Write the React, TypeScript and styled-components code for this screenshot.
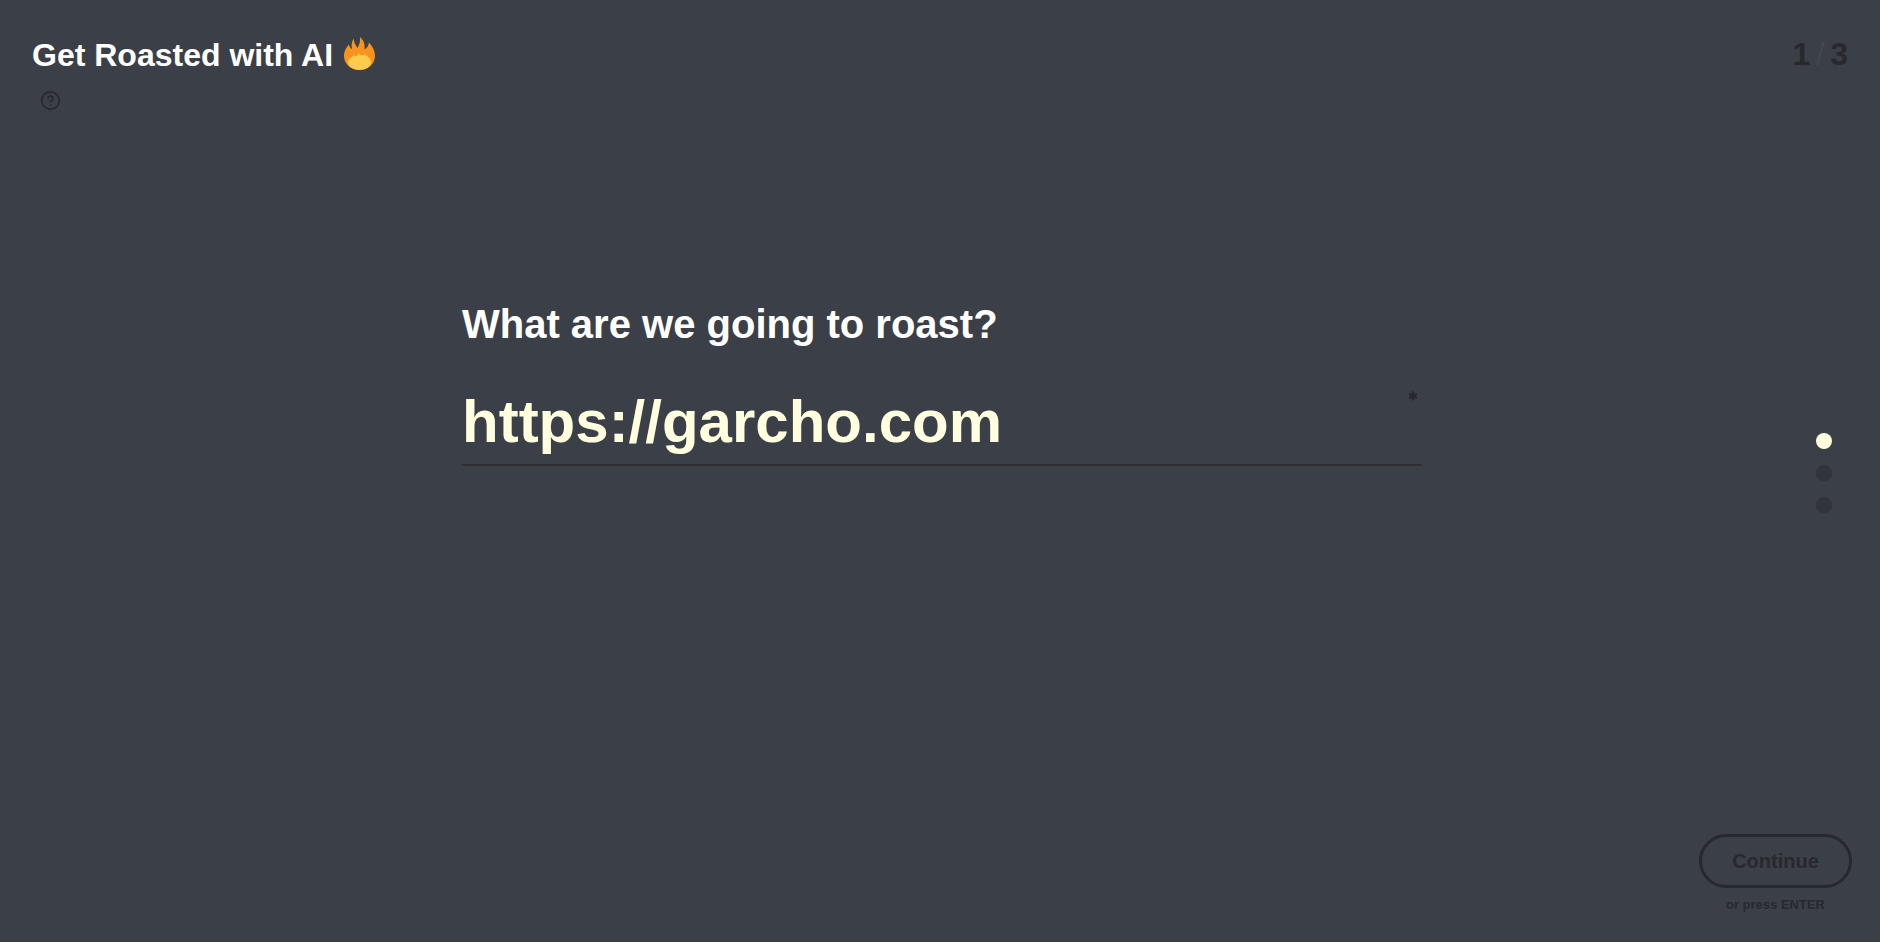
import React from 'react';
import styled, { createGlobalStyle } from 'styled-components';
import { Asterisk, CircleHelp } from 'lucide-react';

const GlobalStyle = createGlobalStyle`
  html, body {
    margin: 0;
    padding: 0;
    background: #3b3f47;
  }
  body {
    font-family: "Liberation Sans", Arial, sans-serif;
  }
`;

const Page = styled.div`
  height: 100vh;
  display: grid;
  grid-template-columns: 462px 960px 1fr;
  grid-template-rows: 126px 1fr 82px;
  background: #3b3f47;
  overflow: hidden;
`;

const Brand = styled.div`
  grid-column: 1;
  padding: 36px 0 0 32px;
  white-space: nowrap;
`;

const Title = styled.h1`
  display: flex;
  align-items: flex-start;
  gap: 11px;
  margin: 0;
  font-size: 32px;
  line-height: 38px;
  font-weight: 700;
  color: #ffffff;
`;

const Flame = styled.svg`
  flex: none;
  width: 31px;
  height: 33px;
  margin-top: 1px;
`;

const HelpButton = styled.div`
  display: flex;
  margin: 16px 0 0 8px;
  color: #27292e;
`;

const Counter = styled.div`
  grid-column: 3;
  display: flex;
  justify-content: flex-end;
  align-items: center;
  align-self: start;
  gap: 5.5px;
  padding: 36px 32px 0 0;
  font-size: 32px;
  line-height: 36px;
  font-weight: 700;
  color: #27292e;
`;

const Slash = styled.span`
  font-weight: 400;
  color: #44474f;
`;

const Form = styled.main`
  grid-column: 2;
  grid-row: 2;
  padding-top: 174px;
`;

const Question = styled.h2`
  margin: 0;
  font-size: 40px;
  line-height: 48px;
  font-weight: 700;
  color: #ffffff;
`;

const Field = styled.div`
  position: relative;
  margin-top: 32px;
  border-bottom: 2px solid #2d2f34;
`;

const Answer = styled.div`
  font-size: 60px;
  line-height: 84px;
  font-weight: 700;
  color: #ffffe0;
`;

const Required = styled.span`
  position: absolute;
  top: 9px;
  right: 2px;
  display: flex;
  color: #27292e;
`;

const Steps = styled.nav`
  grid-column: 3;
  grid-row: 2;
  display: flex;
  flex-direction: column;
  gap: 16px;
  align-items: flex-end;
  padding: 307px 48px 0 0;
`;

const Dot = styled.span<{ $active?: boolean }>`
  width: 16px;
  height: 16px;
  border-radius: 50%;
  background: ${(p) => (p.$active ? '#ffffe0' : '#31343a')};
`;

const Actions = styled.div`
  grid-column: 3;
  grid-row: 2 / 4;
  align-self: end;
  justify-self: end;
  display: flex;
  flex-direction: column;
  align-items: center;
  padding: 0 28px 30px 0;
`;

const ContinueButton = styled.button`
  width: 153px;
  height: 54px;
  padding: 0;
  border: 3px solid #27292e;
  border-radius: 27px;
  background: transparent;
  font-family: inherit;
  font-size: 20px;
  font-weight: 700;
  color: #27292e;
`;

const Hint = styled.span`
  margin-top: 9px;
  font-size: 13px;
  line-height: 15px;
  font-weight: 700;
  color: #27292e;
`;

function App() {
  return (
    <Page>
      <GlobalStyle />
      <Brand>
        <Title>
          Get Roasted with AI
          <Flame viewBox="0 0 31 33" role="img" aria-label="fire">
            <path
              fill="#f7931e"
              d="M16 0C19.5 3 21 6.5 20.5 12.5C23 11 24.5 9 25 5.5C29 10 31 14 31 19C31 27 24 33 15.5 33C7 33 0 27 0 19C0 14 2.5 10 5 7.5C5.5 10 6.5 11.5 8 12C7 8 8 4 9.5 1.5C10 5.5 11.5 8 13.5 11C15.5 7.5 16.5 4 16 0Z"
            />
            <path
              fill="#ffcb4c"
              d="M15 16C16 19 19 19 21 17C22 19 27 21 27 25C27 30 21 33 15.5 33C10 33 4 30 4 25C4 21 8 21 10 18C11 20 13 20 15 16Z"
            />
          </Flame>
        </Title>
        <HelpButton>
          <CircleHelp size={21} strokeWidth={2} />
        </HelpButton>
      </Brand>
      <Counter>
        <span>1</span>
        <Slash>/</Slash>
        <span>3</span>
      </Counter>
      <Form>
        <Question>What are we going to roast?</Question>
        <Field>
          <Answer>https://garcho.com</Answer>
          <Required>
            <Asterisk size={14} strokeWidth={4} />
          </Required>
        </Field>
      </Form>
      <Steps>
        <Dot $active />
        <Dot />
        <Dot />
      </Steps>
      <Actions>
        <ContinueButton>Continue</ContinueButton>
        <Hint>or press ENTER</Hint>
      </Actions>
    </Page>
  );
}

export default App;
